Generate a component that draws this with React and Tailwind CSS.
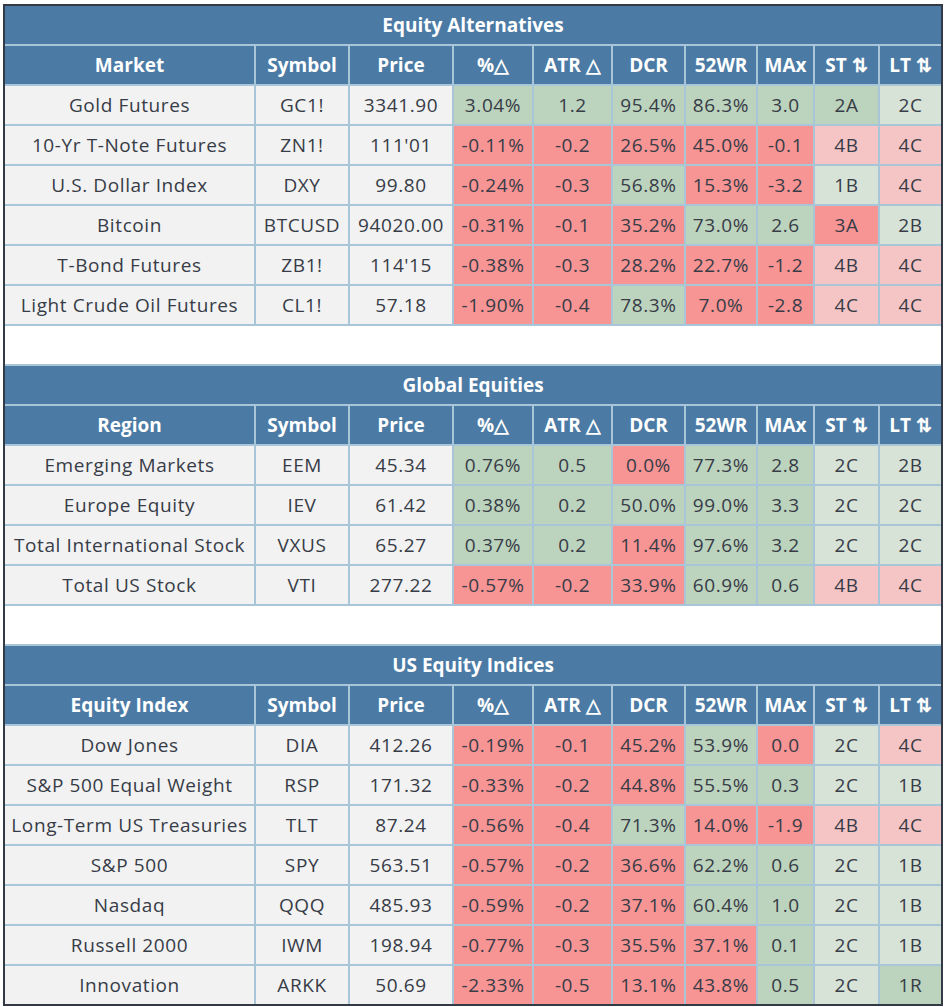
import React from "react";

const G = "bg-[#bcd3bd]";
const R = "bg-[#f79494]";
const P = "bg-[#f5c5c5]";
const L = "bg-[#d8e3d8]";
const map = { G, R, P, L };

const headers = (first) => [first, "Symbol", "Price", "%△", "ATR △", "DCR", "52WR", "MAx", "ST ⇅", "LT ⇅"];

const sections = [
  {
    title: "Equity Alternatives",
    first: "Market",
    rows: [
      ["Gold Futures", "GC1!", "3341.90", ["3.04%", "G"], ["1.2", "G"], ["95.4%", "G"], ["86.3%", "G"], ["3.0", "G"], ["2A", "G"], ["2C", "L"]],
      ["10-Yr T-Note Futures", "ZN1!", "111'01", ["-0.11%", "R"], ["-0.2", "R"], ["26.5%", "R"], ["45.0%", "R"], ["-0.1", "R"], ["4B", "P"], ["4C", "P"]],
      ["U.S. Dollar Index", "DXY", "99.80", ["-0.24%", "R"], ["-0.3", "R"], ["56.8%", "G"], ["15.3%", "R"], ["-3.2", "R"], ["1B", "L"], ["4C", "P"]],
      ["Bitcoin", "BTCUSD", "94020.00", ["-0.31%", "R"], ["-0.1", "R"], ["35.2%", "R"], ["73.0%", "G"], ["2.6", "G"], ["3A", "R"], ["2B", "L"]],
      ["T-Bond Futures", "ZB1!", "114'15", ["-0.38%", "R"], ["-0.3", "R"], ["28.2%", "R"], ["22.7%", "R"], ["-1.2", "R"], ["4B", "P"], ["4C", "P"]],
      ["Light Crude Oil Futures", "CL1!", "57.18", ["-1.90%", "R"], ["-0.4", "R"], ["78.3%", "G"], ["7.0%", "R"], ["-2.8", "R"], ["4C", "P"], ["4C", "P"]],
    ],
  },
  {
    title: "Global Equities",
    first: "Region",
    rows: [
      ["Emerging Markets", "EEM", "45.34", ["0.76%", "G"], ["0.5", "G"], ["0.0%", "R"], ["77.3%", "G"], ["2.8", "G"], ["2C", "L"], ["2B", "L"]],
      ["Europe Equity", "IEV", "61.42", ["0.38%", "G"], ["0.2", "G"], ["50.0%", "G"], ["99.0%", "G"], ["3.3", "G"], ["2C", "L"], ["2C", "L"]],
      ["Total International Stock", "VXUS", "65.27", ["0.37%", "G"], ["0.2", "G"], ["11.4%", "R"], ["97.6%", "G"], ["3.2", "G"], ["2C", "L"], ["2C", "L"]],
      ["Total US Stock", "VTI", "277.22", ["-0.57%", "R"], ["-0.2", "R"], ["33.9%", "R"], ["60.9%", "G"], ["0.6", "G"], ["4B", "P"], ["4C", "P"]],
    ],
  },
  {
    title: "US Equity Indices",
    first: "Equity Index",
    rows: [
      ["Dow Jones", "DIA", "412.26", ["-0.19%", "R"], ["-0.1", "R"], ["45.2%", "R"], ["53.9%", "G"], ["0.0", "R"], ["2C", "L"], ["4C", "P"]],
      ["S&P 500 Equal Weight", "RSP", "171.32", ["-0.33%", "R"], ["-0.2", "R"], ["44.8%", "R"], ["55.5%", "G"], ["0.3", "G"], ["2C", "L"], ["1B", "L"]],
      ["Long-Term US Treasuries", "TLT", "87.24", ["-0.56%", "R"], ["-0.4", "R"], ["71.3%", "G"], ["14.0%", "R"], ["-1.9", "R"], ["4B", "P"], ["4C", "P"]],
      ["S&P 500", "SPY", "563.51", ["-0.57%", "R"], ["-0.2", "R"], ["36.6%", "R"], ["62.2%", "G"], ["0.6", "G"], ["2C", "L"], ["1B", "L"]],
      ["Nasdaq", "QQQ", "485.93", ["-0.59%", "R"], ["-0.2", "R"], ["37.1%", "R"], ["60.4%", "G"], ["1.0", "G"], ["2C", "L"], ["1B", "L"]],
      ["Russell 2000", "IWM", "198.94", ["-0.77%", "R"], ["-0.3", "R"], ["35.5%", "R"], ["37.1%", "R"], ["0.1", "G"], ["2C", "L"], ["1B", "L"]],
      ["Innovation", "ARKK", "50.69", ["-2.33%", "R"], ["-0.5", "R"], ["13.1%", "R"], ["43.8%", "R"], ["0.5", "G"], ["2C", "L"], ["1R", "G"]],
    ],
  },
];

function Cell({ children, bg = "bg-[#f2f2f2]" }) {
  return (
    <div className={`${bg} h-[38px] flex items-center justify-center whitespace-nowrap text-[19px] text-[#373c47] tracking-[0.6px]`}>
      {children}
    </div>
  );
}

export default function App() {
  return (
    <div className="bg-white min-h-[1007px] pt-[4px] pl-[3px]" style={{ fontFamily: "'Open Sans', 'Noto Sans', sans-serif" }}>
      <div className="w-[940px] border-2 border-[#343a45]">
        <div className="grid grid-cols-[249px_92px_102px_78px_77px_71px_70px_55px_63px_61px] gap-[2px] bg-[#a9c5d8]">
          {sections.map((s, si) => (
            <React.Fragment key={s.title}>
              {si > 0 && <div className="col-span-10 h-[38px] bg-white" />}
              <div className="col-span-10 h-[38px] bg-[#4b7ba5] flex items-center justify-center text-white font-bold text-[19px]">
                {s.title}
              </div>
              {headers(s.first).map((h) => (
                <div key={h} className="h-[38px] bg-[#4b7ba5] flex items-center justify-center text-white font-bold text-[19px] whitespace-nowrap">
                  {h}
                </div>
              ))}
              {s.rows.map((r) => (
                <React.Fragment key={r[0]}>
                  <Cell>{r[0]}</Cell>
                  <Cell>{r[1]}</Cell>
                  <Cell>{r[2]}</Cell>
                  {r.slice(3).map((c, i) => (
                    <Cell key={i} bg={map[c[1]]}>{c[0]}</Cell>
                  ))}
                </React.Fragment>
              ))}
            </React.Fragment>
          ))}
        </div>
      </div>
    </div>
  );
}
